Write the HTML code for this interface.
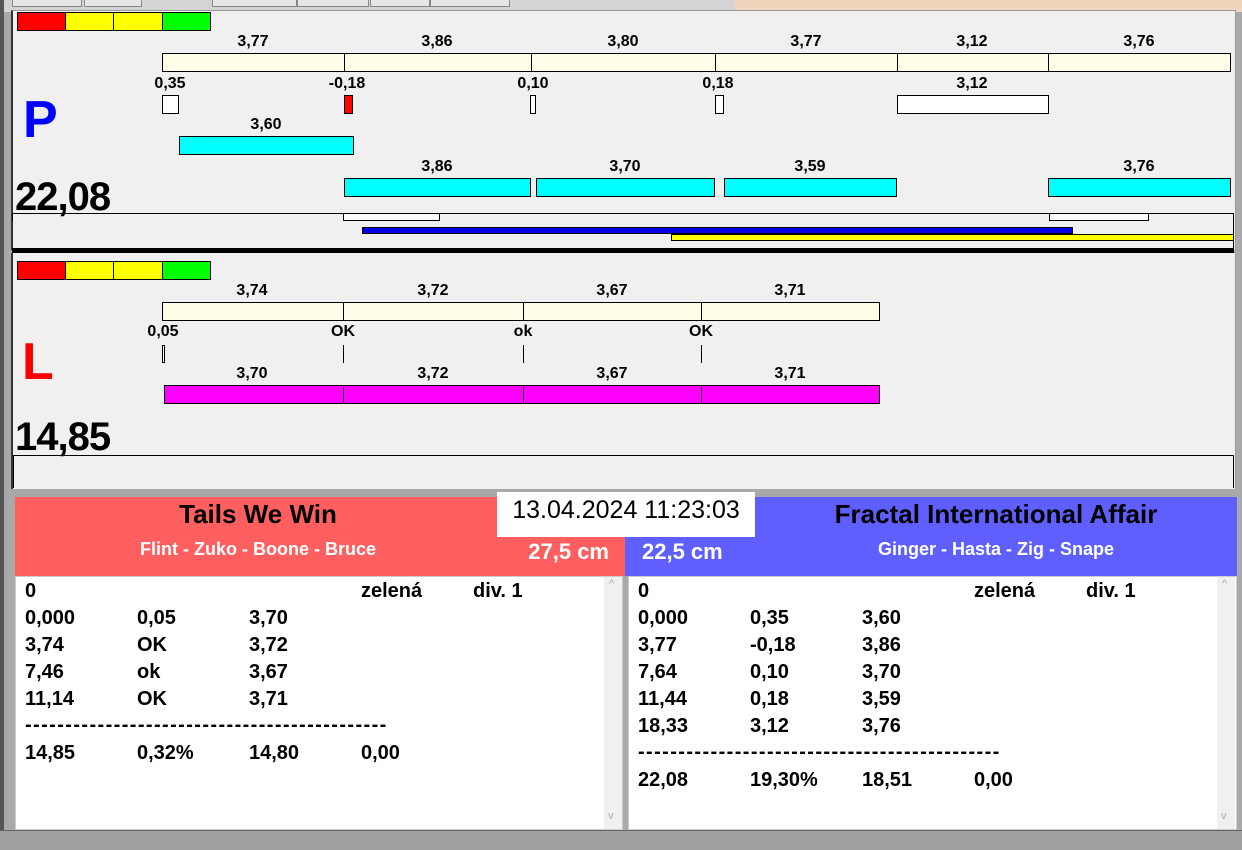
<!DOCTYPE html>
<html><head><meta charset="utf-8"><style>
*{margin:0;padding:0;box-sizing:border-box}
body{width:1242px;height:850px;background:#a9a9a9;position:relative;overflow:hidden;font-family:"Liberation Sans",Arial,sans-serif}
div{position:absolute}
.b{border:1px solid #000}
.t{font-weight:bold;font-size:16px;color:#000;transform:translateX(-50%);white-space:nowrap;line-height:16px;margin-top:2px}
.cy{background:#00ffff;border:1px solid #000}
.cr{background:#fffde8;border:1px solid #000}
.mg{background:#ff00ff;border:1px solid #000}
.lst{font-weight:bold;font-size:20px;line-height:27px;color:#000;white-space:pre}
.ds{letter-spacing:1.4px}
</style></head><body>
<div style="left:0;top:0;width:1242px;height:12px;background:#d4d4d4"></div>
<div style="left:735px;top:0;width:507px;height:12px;background:#f0d4bc"></div>
<div style="left:12px;top:0;width:70px;height:7px;border:1px solid #888;border-top:none;background:#e6e6e6"></div>
<div style="left:84px;top:0;width:58px;height:7px;border:1px solid #888;border-top:none;background:#e6e6e6"></div>
<div style="left:212px;top:0;width:85px;height:7px;border:1px solid #888;border-top:none;background:#e6e6e6"></div>
<div style="left:297px;top:0;width:72px;height:7px;border:1px solid #888;border-top:none;background:#e6e6e6"></div>
<div style="left:370px;top:0;width:60px;height:7px;border:1px solid #888;border-top:none;background:#e6e6e6"></div>
<div style="left:430px;top:0;width:80px;height:7px;border:1px solid #888;border-top:none;background:#e6e6e6"></div>
<div style="left:0;top:0;width:4px;height:850px;background:#555"></div>

<!-- Panel P -->
<div style="left:11px;top:10px;width:1225px;height:240px;background:#f0f0f0;border-left:2px solid #333;border-top:1px solid #999;border-right:1px solid #999"></div>
<div style="left:17px;top:12px;width:49px;height:19px;background:#f00;border:1px solid #000"></div>
<div style="left:65px;top:12px;width:49px;height:19px;background:#ff0;border:1px solid #000"></div>
<div style="left:113px;top:12px;width:50px;height:19px;background:#ff0;border:1px solid #000"></div>
<div style="left:162px;top:12px;width:49px;height:19px;background:#0f0;border:1px solid #000"></div>

<div class="cr" style="left:162px;top:53px;width:183px;height:19px"></div>
<div class="cr" style="left:344px;top:53px;width:188px;height:19px"></div>
<div class="cr" style="left:531px;top:53px;width:185px;height:19px"></div>
<div class="cr" style="left:715px;top:53px;width:183px;height:19px"></div>
<div class="cr" style="left:897px;top:53px;width:152px;height:19px"></div>
<div class="cr" style="left:1048px;top:53px;width:183px;height:19px"></div>
<div class="t" style="left:253px;top:32px">3,77</div>
<div class="t" style="left:437px;top:32px">3,86</div>
<div class="t" style="left:623px;top:32px">3,80</div>
<div class="t" style="left:806px;top:32px">3,77</div>
<div class="t" style="left:972px;top:32px">3,12</div>
<div class="t" style="left:1139px;top:32px">3,76</div>

<div class="t" style="left:170px;top:74px">0,35</div>
<div class="t" style="left:347px;top:74px">-0,18</div>
<div class="t" style="left:533px;top:74px">0,10</div>
<div class="t" style="left:718px;top:74px">0,18</div>
<div class="t" style="left:972px;top:74px">3,12</div>
<div class="b" style="left:162px;top:95px;width:17px;height:19px;background:#fff"></div>
<div class="b" style="left:344px;top:95px;width:9px;height:19px;background:#f00"></div>
<div class="b" style="left:530px;top:95px;width:6px;height:19px;background:#fff"></div>
<div class="b" style="left:715px;top:95px;width:9px;height:19px;background:#fff"></div>
<div class="b" style="left:897px;top:95px;width:152px;height:19px;background:#fff"></div>

<div style="left:23px;top:90px;font-size:52px;font-weight:bold;color:#0000ff;line-height:60px">P</div>
<div class="t" style="left:266px;top:115px">3,60</div>
<div class="cy" style="left:179px;top:136px;width:175px;height:19px"></div>
<div class="t" style="left:437px;top:157px">3,86</div>
<div class="t" style="left:625px;top:157px">3,70</div>
<div class="t" style="left:810px;top:157px">3,59</div>
<div class="t" style="left:1139px;top:157px">3,76</div>
<div class="cy" style="left:344px;top:178px;width:187px;height:19px"></div>
<div class="cy" style="left:536px;top:178px;width:179px;height:19px"></div>
<div class="cy" style="left:724px;top:178px;width:173px;height:19px"></div>
<div class="cy" style="left:1048px;top:178px;width:183px;height:19px"></div>
<div style="left:15px;top:175px;font-size:40px;font-weight:bold;letter-spacing:-1px;line-height:44px">22,08</div>
<div style="left:12px;top:213px;width:1222px;height:1px;background:#000"></div>
<div style="left:12px;top:213px;width:1px;height:8px;background:#000"></div>
<div style="left:1233px;top:213px;width:1px;height:35px;background:#000"></div>
<div class="b" style="left:343px;top:213px;width:97px;height:8px;background:#fff"></div>
<div class="b" style="left:1049px;top:213px;width:100px;height:8px;background:#fff"></div>
<div style="left:362px;top:227px;width:711px;height:7px;background:#0000e0;border:1px solid #000"></div>
<div style="left:671px;top:234px;width:563px;height:7px;background:#ff0;border:1px solid #000"></div>
<div style="left:12px;top:248px;width:1222px;height:5px;background:#000"></div>

<!-- Panel L -->
<div style="left:11px;top:253px;width:1225px;height:236px;background:#f0f0f0;border-left:2px solid #333;border-right:1px solid #999"></div>
<div style="left:17px;top:261px;width:49px;height:19px;background:#f00;border:1px solid #000"></div>
<div style="left:65px;top:261px;width:49px;height:19px;background:#ff0;border:1px solid #000"></div>
<div style="left:113px;top:261px;width:50px;height:19px;background:#ff0;border:1px solid #000"></div>
<div style="left:162px;top:261px;width:49px;height:19px;background:#0f0;border:1px solid #000"></div>
<div class="t" style="left:252px;top:281px">3,74</div>
<div class="t" style="left:433px;top:281px">3,72</div>
<div class="t" style="left:612px;top:281px">3,67</div>
<div class="t" style="left:790px;top:281px">3,71</div>
<div class="cr" style="left:162px;top:302px;width:182px;height:19px"></div>
<div class="cr" style="left:343px;top:302px;width:181px;height:19px"></div>
<div class="cr" style="left:523px;top:302px;width:179px;height:19px"></div>
<div class="cr" style="left:701px;top:302px;width:179px;height:19px"></div>
<div class="t" style="left:163px;top:322px">0,05</div>
<div class="t" style="left:343px;top:322px">OK</div>
<div class="t" style="left:523px;top:322px">ok</div>
<div class="t" style="left:701px;top:322px">OK</div>
<div class="b" style="left:162px;top:345px;width:3px;height:18px;background:#fff"></div>
<div style="left:343px;top:345px;width:1px;height:18px;background:#000"></div>
<div style="left:523px;top:345px;width:1px;height:18px;background:#000"></div>
<div style="left:701px;top:345px;width:1px;height:18px;background:#000"></div>
<div style="left:22px;top:332px;font-size:52px;font-weight:bold;color:#f00;line-height:60px">L</div>
<div class="t" style="left:252px;top:364px">3,70</div>
<div class="t" style="left:433px;top:364px">3,72</div>
<div class="t" style="left:612px;top:364px">3,67</div>
<div class="t" style="left:790px;top:364px">3,71</div>
<div class="mg" style="left:164px;top:385px;width:180px;height:19px"></div>
<div class="mg" style="left:343px;top:385px;width:181px;height:19px"></div>
<div class="mg" style="left:523px;top:385px;width:179px;height:19px"></div>
<div class="mg" style="left:701px;top:385px;width:179px;height:19px"></div>
<div style="left:15px;top:415px;font-size:40px;font-weight:bold;letter-spacing:-1px;line-height:44px">14,85</div>
<div style="left:12px;top:455px;width:1222px;height:1px;background:#000"></div>
<div style="left:13px;top:455px;width:1px;height:33px;background:#000"></div>
<div style="left:1233px;top:455px;width:1px;height:33px;background:#000"></div>

<!-- Bottom -->
<div style="left:15px;top:497px;width:611px;height:79px;background:#ff5f5f"></div>
<div style="left:625px;top:497px;width:612px;height:79px;background:#5f5fff"></div>
<div style="left:497px;top:492px;width:258px;height:45px;background:#fff"></div>
<div style="left:497px;top:494px;width:258px;text-align:center;font-size:25px;line-height:32px">13.04.2024 11:23:03</div>
<div style="left:15px;top:498px;width:486px;text-align:center;font-size:26px;font-weight:bold;line-height:32px">Tails We Win</div>
<div style="left:755px;top:498px;width:482px;text-align:center;font-size:26px;font-weight:bold;line-height:32px">Fractal International Affair</div>
<div style="left:15px;top:538px;width:486px;text-align:center;font-size:18px;font-weight:bold;color:#fff;line-height:22px">Flint - Zuko - Boone - Bruce</div>
<div style="left:755px;top:538px;width:482px;text-align:center;font-size:18px;font-weight:bold;color:#fff;line-height:22px">Ginger - Hasta - Zig - Snape</div>
<div style="left:480px;top:539px;width:129px;text-align:right;font-size:22px;font-weight:bold;color:#fff;line-height:26px">27,5 cm</div>
<div style="left:642px;top:539px;font-size:22px;font-weight:bold;color:#fff;line-height:26px">22,5 cm</div>

<div style="left:15px;top:576px;width:608px;height:254px;background:#fff;border:1px solid #ccc"></div>
<div style="left:604px;top:577px;width:18px;height:252px;background:#f0f0f0"></div>
<div style="left:609px;top:578px;font-size:11px;color:#aaa">^</div>
<div style="left:608px;top:810px;font-size:11px;color:#aaa">v</div>
<div style="left:623px;top:576px;width:5px;height:254px;background:#a9a9a9"></div>
<div style="left:628px;top:576px;width:609px;height:254px;background:#fff;border:1px solid #ccc"></div>
<div style="left:1217px;top:577px;width:18px;height:252px;background:#f0f0f0"></div>
<div style="left:1222px;top:578px;font-size:11px;color:#aaa">^</div>
<div style="left:1221px;top:810px;font-size:11px;color:#aaa">v</div>

<div class="lst" style="left:25px;top:578px">0</div>
<div class="lst" style="left:361px;top:578px">zelená</div>
<div class="lst" style="left:473px;top:578px">div. 1</div>
<div class="lst" style="left:25px;top:605px">0,000
3,74
7,46
11,14</div>
<div class="lst" style="left:137px;top:605px">0,05
OK
ok
OK</div>
<div class="lst" style="left:249px;top:605px">3,70
3,72
3,67
3,71</div>
<div class="lst ds" style="left:25px;top:712px">---------------------------------------------</div>
<div class="lst" style="left:25px;top:740px">14,85</div>
<div class="lst" style="left:137px;top:740px">0,32%</div>
<div class="lst" style="left:249px;top:740px">14,80</div>
<div class="lst" style="left:361px;top:740px">0,00</div>

<div class="lst" style="left:638px;top:578px">0</div>
<div class="lst" style="left:974px;top:578px">zelená</div>
<div class="lst" style="left:1086px;top:578px">div. 1</div>
<div class="lst" style="left:638px;top:605px">0,000
3,77
7,64
11,44
18,33</div>
<div class="lst" style="left:750px;top:605px">0,35
-0,18
0,10
0,18
3,12</div>
<div class="lst" style="left:862px;top:605px">3,60
3,86
3,70
3,59
3,76</div>
<div class="lst ds" style="left:638px;top:739px">---------------------------------------------</div>
<div class="lst" style="left:638px;top:767px">22,08</div>
<div class="lst" style="left:750px;top:767px">19,30%</div>
<div class="lst" style="left:862px;top:767px">18,51</div>
<div class="lst" style="left:974px;top:767px">0,00</div>

<div style="left:0;top:830px;width:1242px;height:20px;background:#a0a0a0;border-top:1px solid #666"></div>
</body></html>
